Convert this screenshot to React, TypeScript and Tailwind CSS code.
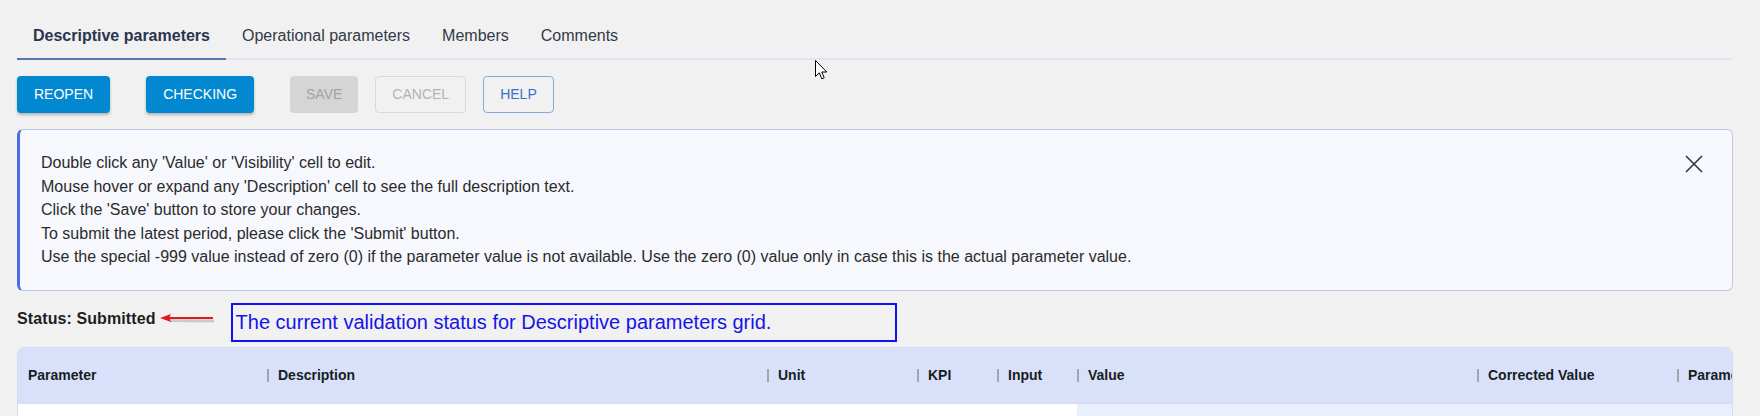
import React from 'react';

const tabs = ['Descriptive parameters', 'Operational parameters', 'Members', 'Comments'];

const hints = [
  "Double click any 'Value' or 'Visibility' cell to edit.",
  "Mouse hover or expand any 'Description' cell to see the full description text.",
  "Click the 'Save' button to store your changes.",
  "To submit the latest period, please click the 'Submit' button.",
  'Use the special -999 value instead of zero (0) if the parameter value is not available. Use the zero (0) value only in case this is the actual parameter value.',
];

// column header widths, separator sits at the left of every column but the first
const columns = [
  { name: 'Parameter', width: 'w-[249px]' },
  { name: 'Description', width: 'w-[500px]' },
  { name: 'Unit', width: 'w-[150px]' },
  { name: 'KPI', width: 'w-[80px]' },
  { name: 'Input', width: 'w-[80px]' },
  { name: 'Value', width: 'w-[400px]' },
  { name: 'Corrected Value', width: 'w-[200px]' },
  { name: 'Parameter visibility', width: 'w-[200px]' },
];

const App: React.FC = () => {
  return (
    <div className="relative h-[416px] overflow-hidden bg-[#f1f1f1] pl-[17px] pr-[27px] pt-[13px] font-['Liberation_Sans',Arial,sans-serif]">
      {/* Tabs */}
      <div className="flex border-b-2 border-[#dfe5f5]">
        {tabs.map((tab, i) => (
          <div
            key={tab}
            className={`-mb-[2px] flex h-[47px] items-center px-4 text-[16px] ${
              i === 0
                ? 'border-b-2 border-[#5a73b1] font-bold text-[#2b3450]'
                : 'border-b-2 border-transparent text-[#333a48]'
            }`}
          >
            {tab}
          </div>
        ))}
      </div>

      {/* Toolbar */}
      <div className="mt-4 flex items-center text-[14px]">
        <button className="h-[37px] rounded bg-[#0288d1] px-[17px] text-white shadow-[0_2px_3px_rgba(0,0,0,0.25)]">
          REOPEN
        </button>
        <button className="ml-9 h-[37px] rounded bg-[#0288d1] px-[17px] text-white shadow-[0_2px_3px_rgba(0,0,0,0.25)]">
          CHECKING
        </button>
        <button className="ml-9 h-[37px] rounded bg-[#d5d5d5] px-[16px] text-[#a3a3a3]">
          SAVE
        </button>
        <button className="ml-[17px] h-[37px] rounded border border-[#d9d9d9] px-[16px] text-[#b3b3b3]">
          CANCEL
        </button>
        <button className="ml-[17px] h-[37px] rounded border border-[#86a9e3] px-[16px] text-[#3b6fc9]">
          HELP
        </button>
      </div>

      {/* Info panel */}
      <div className="mt-4 flex justify-between rounded-md border border-l-[3px] border-[#b9c8ec] border-l-[#4a6fe3] bg-[#f6f8fd] py-[21px] pl-[21px] pr-[29px]">
        <div className="text-[16px] leading-[23.5px] text-[#2b2b2b]">
          {hints.map((line) => (
            <div key={line}>{line}</div>
          ))}
        </div>
        <button className="mt-[4px] self-start" aria-label="close">
          <svg width="18" height="18" viewBox="0 0 18 18">
            <path d="M1 1 L17 17 M17 1 L1 17" stroke="#2d3548" strokeWidth="1.6" fill="none" />
          </svg>
        </button>
      </div>

      {/* Status row */}
      <div className="mt-3 flex items-start">
        <div className="mt-[5px] text-[16px] font-bold leading-[22px] tracking-[0.1px] text-[#1e1e1e]">
          Status: Submitted
        </div>
        <svg className="ml-[3px] mt-[9px]" width="56" height="14" viewBox="0 0 56 14">
          <line x1="10" y1="8.5" x2="55" y2="9" stroke="rgba(0,0,0,0.16)" strokeWidth="3" />
          <line x1="6" y1="6" x2="54" y2="6" stroke="#e8141b" strokeWidth="2" />
          <path d="M1 6 L12 2 L10 6 L12 10 Z" fill="#e8141b" />
        </svg>
        <div className="ml-[16px] flex h-[39px] w-[666px] items-center border-2 border-[#1212f0] px-[3px] text-[20px] text-[#1515e6]">
          The current validation status for Descriptive parameters grid.
        </div>
      </div>

      {/* Grid */}
      <div className="mt-[5px] overflow-hidden rounded-t-lg border-x border-t border-[#d4dcf2]">
        <div className="flex h-[56px] items-center overflow-hidden border-b border-[#d9dbe0] bg-[#d9e1fa] text-[14px] font-bold text-[#181d1f]">
          {columns.map((col, i) => (
            <div key={col.name} className={`flex shrink-0 items-center ${col.width} ${i === 0 ? 'pl-[10px]' : ''}`}>
              {i > 0 && <div className="h-[13px] w-[2px] bg-[#9fa4ad]" />}
              <span className={`whitespace-nowrap ${i > 0 ? 'ml-[9px]' : ''}`}>{col.name}</span>
            </div>
          ))}
        </div>
        <div className="flex h-[40px]">
          <div className="w-[1059px] shrink-0 bg-white" />
          <div className="flex-1 bg-[#e9effd]" />
        </div>
      </div>

      {/* Mouse pointer captured in the screenshot */}
      <svg className="absolute left-[815px] top-[60px]" width="13" height="21" viewBox="0 0 13 21">
        <path d="M0.5 0.5 L0.5 16.5 L4.3 12.8 L6.8 18.8 L9.2 17.8 L6.8 12 L11.8 12 Z" fill="#ffffff" stroke="#000000" strokeWidth="1" />
      </svg>
    </div>
  );
};

export default App;
